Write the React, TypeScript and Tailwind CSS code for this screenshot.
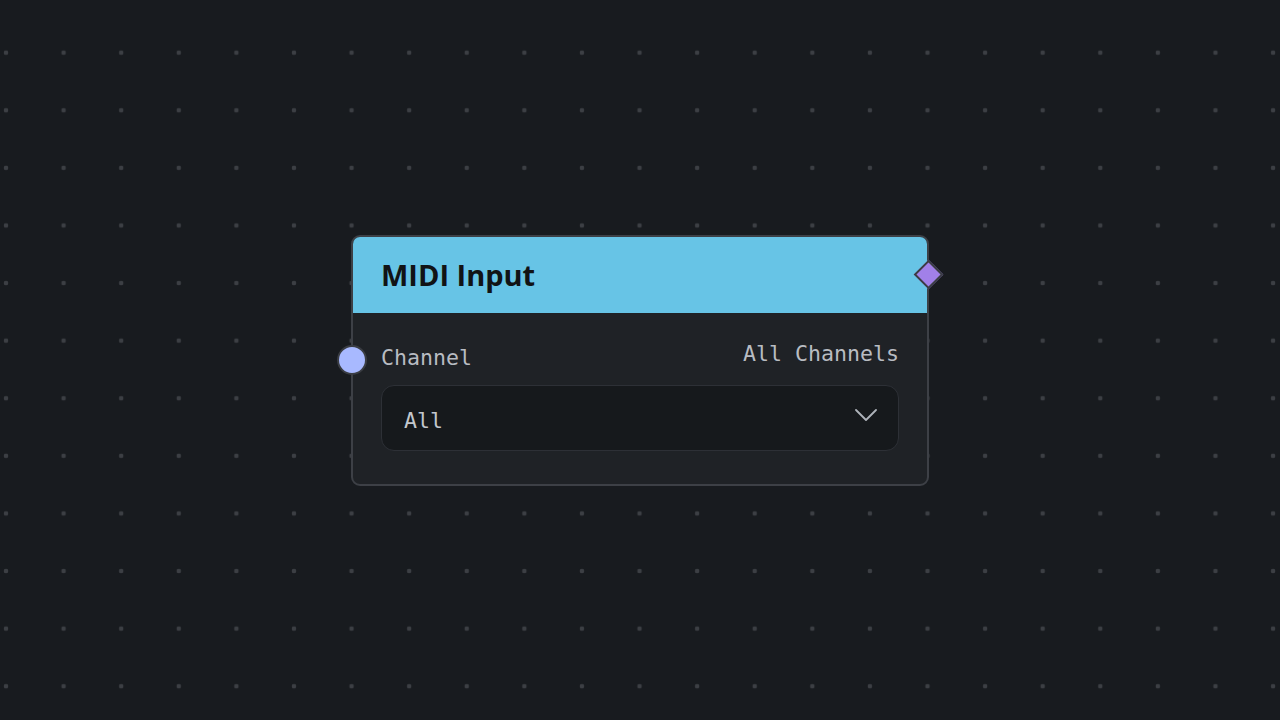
import { useState } from "react";

const channels = ["All", ...Array.from({ length: 16 }, (_, i) => String(i + 1))];

function ChevronIcon() {
  return (
    <svg width="22" height="12" viewBox="0 0 22 12" fill="none" className="pointer-events-none">
      <path d="M1 1l10 10L21 1" stroke="#aeb3ba" strokeWidth="1.8" strokeLinecap="round" strokeLinejoin="round" />
    </svg>
  );
}

function MidiInputNode() {
  const [channel, setChannel] = useState("All");

  return (
    <div className="relative w-[578px] rounded-[9px] border-2 border-[#3d4046] bg-[#1f2226]">
      {/* output handle */}
      <div className="absolute right-[-12px] top-[27px] h-[21px] w-[21px] rotate-45 border-2 border-[#3a3d43] bg-[#a180e8]" />
      {/* input handle */}
      <div className="absolute left-[-16px] top-[108px] h-[30px] w-[30px] rounded-full border-2 border-[#3a3d43] bg-[#a8b9ff]" />

      <div className="flex h-[76px] items-center rounded-t-[7px] bg-[#67c4e6] px-7">
        <h2 className="font-['Open_Sans',sans-serif] text-[29px] font-bold text-[#111315]">MIDI Input</h2>
      </div>

      <div className="flex flex-col px-7 pb-[33px] pt-[28px] font-['DejaVu_Sans_Mono',monospace] text-[21.6px]">
        <div className="flex h-[30px] items-start justify-between">
          <span className="pt-[4px] leading-[26px] text-[#b8bcc2]">Channel</span>
          <span className="leading-[26px] text-[#b8bcc2]">{channel === "All" ? "All Channels" : `Channel ${channel}`}</span>
        </div>
        <div className="relative mt-[14px]">
          <select
            value={channel}
            onChange={(e) => setChannel(e.target.value)}
            className="h-[66px] w-full appearance-none rounded-[13px] border border-[#2d3036] bg-[#16191c] px-[22px] pt-[7px] text-[#c3c7cd] outline-none"
          >
            {channels.map((c) => (
              <option key={c} value={c}>
                {c}
              </option>
            ))}
          </select>
          <div className="absolute right-[22px] top-[24px]">
            <ChevronIcon />
          </div>
        </div>
      </div>
    </div>
  );
}

export default function App() {
  return (
    <div className="flex h-[720px] w-full items-center justify-center bg-[#181b1f] bg-[radial-gradient(circle,#3c3f44_2px,transparent_2.6px)] bg-[length:57.6px_57.6px] bg-[position:34.8px_23.9px]">
      <MidiInputNode />
    </div>
  );
}
